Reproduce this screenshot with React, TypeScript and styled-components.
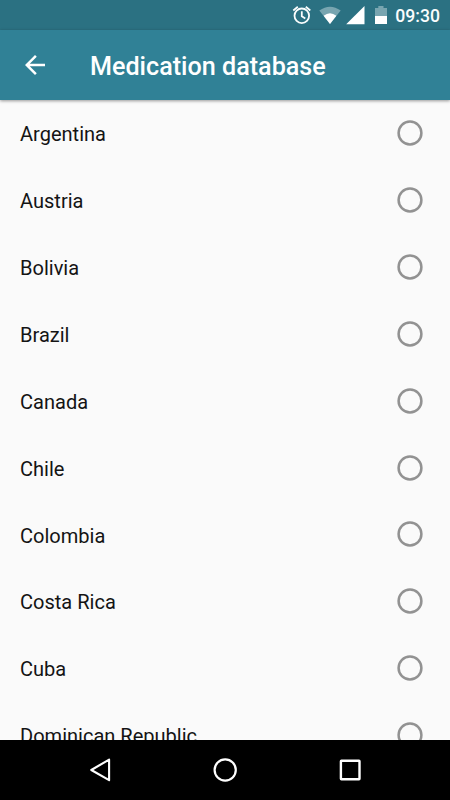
import React from "react";
import styled, { createGlobalStyle } from "styled-components";

const GlobalStyle = createGlobalStyle`
  * { box-sizing: border-box; }
  body { margin: 0; font-family: Roboto, sans-serif; background: #fafafa; }
`;

const Screen = styled.div`
  width: 450px;
  height: 800px;
  display: flex;
  flex-direction: column;
  overflow: hidden;
  background: #fafafa;
`;

const StatusBar = styled.div`
  height: 30px;
  flex: none;
  display: flex;
  align-items: center;
  justify-content: flex-end;
  padding: 0 10px 0 0;
  background: #2b7182;
  color: #fff;
`;

const StatusIcons = styled.svg`
  display: block;
  width: 100px;
  height: 30px;
  margin-right: 5px;
`;

const Clock = styled.span`
  font-size: 17.6px;
  font-weight: 500;
  line-height: 30px;
  padding-top: 2px;
  color: #fafdfd;
`;

const AppBar = styled.header`
  height: 70px;
  flex: none;
  display: flex;
  align-items: center;
  padding-left: 20px;
  background: #308196;
  color: #fff;
  box-shadow: 0 1px 3px rgba(0, 0, 0, 0.4);
`;

const BackButton = styled.button`
  width: 70px;
  height: 30px;
  padding: 0;
  border: 0;
  background: none;
  color: inherit;
`;

const Title = styled.h1`
  margin: 0;
  padding-top: 4px;
  font-size: 25.15px;
  font-weight: 500;
  line-height: 32px;
`;

const List = styled.ul`
  flex: 1;
  min-height: 0;
  overflow: hidden;
  margin: 0;
  padding: 0;
  list-style: none;
`;

const Row = styled.li`
  height: 66.85px;
  display: flex;
  align-items: center;
  justify-content: space-between;
  padding: 0 27px 0 20px;
`;

const Country = styled.span`
  font-size: 20.05px;
  line-height: 24px;
  padding-top: 2.1px;
  color: #141414;
`;

const Radio = styled.svg`
  width: 26px;
  height: 26px;
  fill: none;
  stroke: #929292;
  stroke-width: 2.5px;
`;

const NavBar = styled.nav`
  height: 60px;
  flex: none;
  display: flex;
  justify-content: center;
  background: #000;
`;

const NavButton = styled.button`
  width: 125px;
  height: 60px;
  padding: 0;
  border: 0;
  background: none;
`;

const Icon = styled.svg`
  display: block;
`;

const countries = [
  "Argentina", "Austria", "Bolivia", "Brazil", "Canada",
  "Chile", "Colombia", "Costa Rica", "Cuba", "Dominican Republic",
];

export default function App() {
  return (
    <>
      <GlobalStyle />
      <Screen>
        <StatusBar>
          <StatusIcons viewBox="290 0 100 30">
            <g fill="none" stroke="#fafdfd" strokeWidth="1.8">
              <circle cx="301.8" cy="15.8" r="7.3" />
              <path d="M301.8 11.3V16.3L305.3 18.5M293.3 10.5L297.8 6.8M305.8 6.8L310.3 10.5" />
            </g>
            <path d="M319.3 10.5Q330 2.8 340.7 10.5L330 24Z" fill="#78a5b0" />
            <path d="M323.6 15.8Q330 10.8 336.4 15.8L330 24Z" fill="#fff" />
            <path d="M364.5 6V24.3H346.2Z" fill="#fff" />
            <path d="M375 8H378.3V6H383.5V8H387V16H375Z" fill="#78a5b0" />
            <path d="M375 16H387V24H375Z" fill="#fff" />
          </StatusIcons>
          <Clock>09:30</Clock>
        </StatusBar>
        <AppBar>
          <BackButton aria-label="Back">
            <Icon width="30" height="30" viewBox="0 0 24 24">
              <path fill="#fff" d="M20 11H7.83l5.59-5.59L12 4l-8 8 8 8 1.41-1.41L7.83 13H20v-2z" />
            </Icon>
          </BackButton>
          <Title>Medication database</Title>
        </AppBar>
        <List>
          {countries.map((name) => (
            <Row key={name}>
              <Country>{name}</Country>
              <Radio viewBox="0 0 26 26" role="radio" aria-checked={false} aria-label={name}>
                <circle cx="13" cy="13" r="11.4" />
              </Radio>
            </Row>
          ))}
        </List>
        <NavBar>
          <NavButton aria-label="Back">
            <Icon width="125" height="60" viewBox="0 0 125 60">
              <path d="M71.1 40.2V19.6L53.3 30Z" fill="none" stroke="#fff" strokeWidth="2.1" strokeLinejoin="round" />
            </Icon>
          </NavButton>
          <NavButton aria-label="Home">
            <Icon width="125" height="60" viewBox="0 0 125 60">
              <circle cx="62.2" cy="30" r="10.6" fill="none" stroke="#fff" strokeWidth="2.2" />
            </Icon>
          </NavButton>
          <NavButton aria-label="Overview">
            <Icon width="125" height="60" viewBox="0 0 125 60">
              <rect x="52.9" y="20.7" width="18.6" height="18.6" rx="0.5" fill="none" stroke="#fff" strokeWidth="2.4" />
            </Icon>
          </NavButton>
        </NavBar>
      </Screen>
    </>
  );
}
